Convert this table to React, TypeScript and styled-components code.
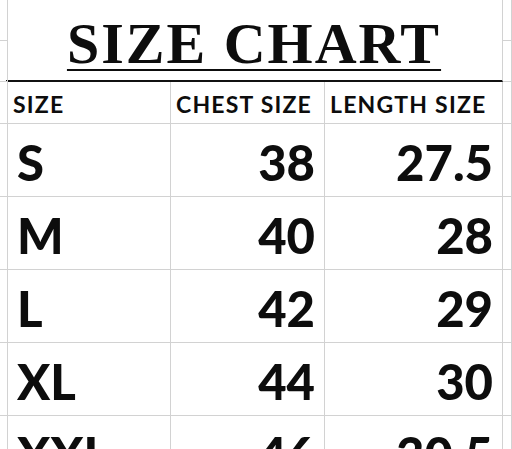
import styled, { createGlobalStyle } from "styled-components"

const rows = [
  { size: "S", chest: "38", length: "27.5" },
  { size: "M", chest: "40", length: "28" },
  { size: "L", chest: "42", length: "29" },
  { size: "XL", chest: "44", length: "30" },
  { size: "XXL", chest: "46", length: "30.5" },
];

export default function App() {
  return (
    <>
      <GlobalStyle />
      <Sheet>
        <Edge />
        <TitleCell>
          <Title>SIZE CHART</Title>
        </TitleCell>
        <Edge />
        <Edge />
        <Edge />

        <Edge />
        <HeadCell>SIZE</HeadCell>
        <HeadCell>CHEST SIZE</HeadCell>
        <HeadCell>LENGTH SIZE</HeadCell>
        <Edge />

        {rows.map((row) => (
          <Row key={row.size}>
            <Edge />
            <Cell>{row.size}</Cell>
            <Cell right>{row.chest}</Cell>
            <Cell right>{row.length}</Cell>
            <Edge />
          </Row>
        ))}
      </Sheet>
    </>
  );
}

const GlobalStyle = createGlobalStyle`
  html, body {
    margin: 0;
    padding: 0;
    background: #fff;
    overflow: hidden;
  }
`;

const Sheet = styled.div`
  display: grid;
  grid-template-columns: 8px 163px 154px 178px 1fr;
  grid-template-rows: 41px 41px 42px repeat(5, 73px);
  width: 512px;
  height: 449px;
  overflow: hidden;
  color: #0d0d0d;
`;

const Row = styled.div`
  display: contents;
`;

const Edge = styled.div`
  box-sizing: border-box;
  border-right: 1px solid #d2d2d2;
  border-bottom: 1px solid #d2d2d2;
`;

const TitleCell = styled.div`
  grid-column: 2 / 5;
  grid-row: 1 / 3;
  box-sizing: border-box;
  border-right: 1px solid #d2d2d2;
  border-bottom: 2px solid #111;
  margin-left: -2px;
  padding-top: 15px;
  text-align: center;
`;

const Title = styled.span`
  font-family: "Liberation Serif", "Times New Roman", serif;
  font-weight: 700;
  font-size: 58px;
  line-height: 58px;
  letter-spacing: 2px;
  text-decoration: underline;
  text-decoration-thickness: 2px;
  text-underline-offset: 6px;
`;

const HeadCell = styled.div`
  box-sizing: border-box;
  border-right: 1px solid #d2d2d2;
  border-bottom: 1px solid #d2d2d2;
  padding: 11px 0 0 5px;
  font-family: Lato, "Open Sans", sans-serif;
  font-weight: 700;
  font-size: 23px;
  line-height: 23px;
  letter-spacing: 1.2px;
  white-space: nowrap;
`;

const Cell = styled.div<{ right?: boolean }>`
  box-sizing: border-box;
  border-right: 1px solid #d2d2d2;
  border-bottom: 1px solid #d2d2d2;
  padding: 14px ${(p) => (p.right ? "9px" : "0")} 0 ${(p) => (p.right ? "0" : "9px")};
  text-align: ${(p) => (p.right ? "right" : "left")};
  font-family: Lato, "Open Sans", sans-serif;
  font-weight: 900;
  font-size: 49px;
  line-height: 49px;
`;
